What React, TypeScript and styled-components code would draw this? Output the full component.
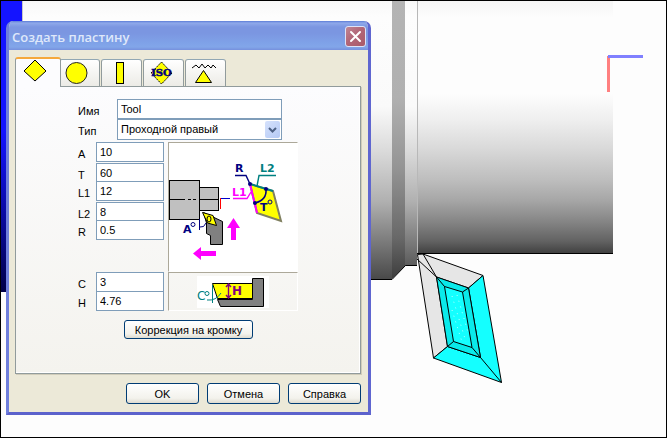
import React from "react";
import styled, { createGlobalStyle } from "styled-components";

const GlobalStyle = createGlobalStyle`
  * { box-sizing: border-box; }
  body {
    margin: 0;
    background: #fdfdfd;
    font-family: "Liberation Sans", Arial, sans-serif;
    font-size: 11px;
    line-height: 14px;
    color: #000;
  }
  button, input, select { font: inherit; color: inherit; }
`;

const Viewport = styled.main`
  position: relative;
  min-height: 100vh;
  border: 1px solid #000;
  overflow: hidden;
`;

const Scene = styled.svg`
  position: absolute;
  top: 0;
  left: 0;
  display: block;
`;

const Dialog = styled.section`
  position: absolute;
  top: 20px;
  left: 5px;
  width: 365px;
  border: solid #6f7fdc;
  border-width: 0 3px 3px;
  border-right-color: #5f66d0;
  border-bottom-color: #5c62cc;
  border-radius: 7px 7px 0 0;
  background: #ece9d8;
  overflow: hidden;
`;

const TitleBar = styled.header`
  display: flex;
  align-items: center;
  justify-content: space-between;
  height: 29px;
  margin: 0 -3px;
  padding: 2px 5px 0 6px;
  background: linear-gradient(#5b7cd6 0, #8fa9ea 2px, #7b96e1 6px, #7b96e1 12px, #7fa2e8 22px, #82a6e9 26px, #7690dd 29px);
`;

const Title = styled.h1`
  margin: 0;
  font: 600 13px/18px "Open Sans", sans-serif;
  color: #dfe8fa;
`;

const CloseButton = styled.button`
  display: flex;
  align-items: center;
  justify-content: center;
  width: 21px;
  height: 21px;
  padding: 0;
  border: 1px solid #dde3f8;
  border-radius: 3px;
  background: linear-gradient(135deg, #c08794, #b26678 45%, #a95a68);
`;

const Body = styled.div`
  padding: 7px 7px 8px 6px;
`;

const TabStrip = styled.div`
  display: flex;
  align-items: flex-end;
  gap: 1px;
  height: 29px;
`;

const Tab = styled.button<{ $active?: boolean }>`
  display: flex;
  align-items: center;
  justify-content: center;
  width: ${(p) => (p.$active ? 46 : 41)}px;
  height: ${(p) => (p.$active ? 30 : 27)}px;
  margin: ${(p) => (p.$active ? "0 -3px -1px 0" : "0")};
  padding: 0 4px ${(p) => (p.$active ? 5 : 0)}px 0;
  border: 1px solid #919b9c;
  border-top: ${(p) => (p.$active ? "2px solid #f5a83c" : "1px solid #91a7b4")};
  border-bottom: 0;
  border-radius: 3px 3px 0 0;
  background: ${(p) => (p.$active ? "#fcfcfe" : "linear-gradient(#fff, #ecebe6)")};
  z-index: ${(p) => (p.$active ? 1 : 0)};
`;

const Panel = styled.form`
  display: flex;
  flex-direction: column;
  padding: 12px 61px 34px 62px;
  border: 1px solid #919b9c;
  background: linear-gradient(#fcfcfe, #f4f3ee);
  box-shadow: 1px 1px 0 #d0ccba, inset -1px -1px 0 #fff;
`;

const Row = styled.div<{ $label: number }>`
  display: grid;
  grid-template-columns: ${(p) => p.$label}px 1fr;
`;

const Label = styled.label`
  padding-top: 5px;
  line-height: 14px;
  height: 18px;
`;

const TextBox = styled.input<{ $joined?: boolean; $height?: number }>`
  width: 100%;
  min-width: 0;
  height: ${(p) => p.$height ?? 20}px;
  padding: 0 3px;
  border: 1px solid #7f9db9;
  border-bottom-width: ${(p) => (p.$joined ? 0 : 1)}px;
  border-radius: 0;
  background: #fff;
  outline: 0;
`;

const TopFields = styled.div`
  width: 204px;
  margin-bottom: 2px;
`;

const SelectBox = styled.div`
  display: flex;
  position: relative;
  height: 21px;
`;

const Select = styled.select`
  appearance: none;
  width: 100%;
  padding: 0 18px 1px 3px;
  border: 1px solid #7f9db9;
  border-radius: 0;
  background: #fff;
`;

const DropArrow = styled.span`
  position: absolute;
  top: 2px;
  right: 2px;
  display: flex;
  align-items: center;
  justify-content: center;
  width: 15px;
  height: 17px;
  border-radius: 2px;
  background: linear-gradient(135deg, #d6e2fc, #b4c9f5);
  pointer-events: none;
`;

const Params = styled.div`
  display: grid;
  grid-template-columns: 86px 130px;
  column-gap: 4px;
`;

const ParamGroup = styled.div`
  display: flex;
  flex-direction: column;
`;

const ParamPair = styled.div`
  margin-bottom: 1px;
`;

const Figure = styled.div<{ $plain?: boolean }>`
  display: flex;
  align-items: center;
  justify-content: center;
  height: ${(p) => (p.$plain ? 39 : 130)}px;
  border: 1px solid #aca899;
  border-right-color: #fff;
  border-bottom-color: #fff;
  background: ${(p) => (p.$plain ? "transparent" : "#fff")};
`;

const PushButton = styled.button<{ $wide?: boolean }>`
  width: ${(p) => (p.$wide ? 129 : 73)}px;
  height: ${(p) => (p.$wide ? 19 : 21)}px;
  padding: 0;
  border: 1px solid #003c74;
  border-radius: 3px;
  background: linear-gradient(#fff, #f3f2ec 75%, #dedbd0);
  white-space: nowrap;
`;

const EdgeAction = styled.div`
  display: flex;
  margin: 9px 0 0 46px;
`;

const Footer = styled.footer`
  display: flex;
  justify-content: flex-end;
  gap: 8px;
  margin-top: 9px;
`;

function MachiningScene() {
  return (
    <Scene width="665" height="436" viewBox="1 1 665 436" aria-hidden="true">
      <defs>
        <linearGradient id="chuck" x1="0" y1="0" x2="0" y2="1">
          <stop offset="0" stopColor="#1414ff" />
          <stop offset="0.45" stopColor="#1414ff" />
          <stop offset="1" stopColor="#000048" />
        </linearGradient>
        <linearGradient id="body" gradientUnits="userSpaceOnUse" x1="0" y1="0" x2="0" y2="280">
          <stop offset="0" stopColor="#f8f8f8" />
          <stop offset="0.06" stopColor="#fdfdfd" />
          <stop offset="0.38" stopColor="#fafafa" />
          <stop offset="0.54" stopColor="#dadada" />
          <stop offset="0.72" stopColor="#b0b0b0" />
          <stop offset="0.86" stopColor="#7c7c7c" />
          <stop offset="1" stopColor="#484848" />
        </linearGradient>
        <linearGradient id="chamfer" gradientUnits="userSpaceOnUse" x1="0" y1="0" x2="0" y2="280">
          <stop offset="0" stopColor="#b4b4b4" />
          <stop offset="0.35" stopColor="#b0b0b0" />
          <stop offset="0.6" stopColor="#949494" />
          <stop offset="0.85" stopColor="#686868" />
          <stop offset="1" stopColor="#3c3c3c" />
        </linearGradient>
        <linearGradient id="shaft" gradientUnits="userSpaceOnUse" x1="0" y1="0" x2="0" y2="254">
          <stop offset="0" stopColor="#f5f5f5" />
          <stop offset="0.07" stopColor="#fdfdfd" />
          <stop offset="0.37" stopColor="#fdfdfd" />
          <stop offset="0.47" stopColor="#efefef" />
          <stop offset="0.59" stopColor="#d8d8d8" />
          <stop offset="0.71" stopColor="#bdbdbd" />
          <stop offset="0.79" stopColor="#a6a6a6" />
          <stop offset="0.87" stopColor="#868686" />
          <stop offset="0.95" stopColor="#626262" />
          <stop offset="1" stopColor="#3e3e3e" />
        </linearGradient>
      </defs>
      <rect x="1" y="1" width="21" height="291" fill="url(#chuck)" />
      <rect x="22" y="1" width="1" height="278" fill="#c8c8c8" />
      <rect x="23" y="1" width="369" height="278" fill="url(#body)" />
      <path d="M392 1H405V266L392 279Z" fill="url(#chamfer)" />
      <rect x="405" y="1" width="12" height="265" fill="url(#body)" />
      <rect x="417" y="1" width="196" height="252" fill="url(#shaft)" />
      <rect x="417" y="1" width="1" height="252" fill="#b8b8b8" />
      <path d="M371 279.500H392L405.500 265.500H417M417 253.500H613" fill="none" stroke="#000" />
      <rect x="607" y="56" width="3" height="36" fill="#ff8080" />
      <rect x="608" y="55" width="35" height="3" fill="#8080ff" />

      <g stroke="#000" strokeLinejoin="round">
        <path d="M417.500 254.500L423 254L483 275.500L468.500 288L436.500 277L447.500 346.500L433.500 358Z" fill="#e6e6e6" />
        <path d="M483 275.500L501.500 382.500L433.500 358L447.500 346.500L480.500 357.500L468.500 288Z" fill="#14ffff" />
        <path d="M436.500 277L468.500 288L480.500 357.500L447.500 346.500Z" fill="#0aeaea" />
        <path d="M444.500 286.500L462.500 292L472 347.500L453.500 341.500Z" fill="#14ffff" />
        <path
          d="M417 259L436.500 277L423 254M436.500 277L444.500 286.500M468.500 288L462.500 292M480.500 357.500L472 347.500M447.500 346.500L453.500 341.500M480.500 357.500L501.500 382.500"
          fill="none"
        />
      </g>
      <path d="M452 296L466 342M457 295L468 332M452 310L462 342" stroke="#b9ffff" strokeDasharray="1 5" />
    </Scene>
  );
}

function HolderDrawing() {
  return (
    <svg width="128" height="128" viewBox="0 0 128 128" aria-hidden="true" fontFamily="DejaVu Sans" fontWeight="bold" fontSize="11">
      <g stroke="#000" fill="#c0c0c0">
        <rect x="0.500" y="37.500" width="30" height="39" />
        <rect x="30.500" y="44.500" width="19" height="23" />
        <path d="M0 56.500H50" strokeDasharray="16 3 3 2 3 3 30" />
      </g>
      <path d="M51.500 55V66" stroke="#f00" />
      <path d="M52 55.500H61" stroke="#00c" />
      <path d="M34.500 69.500L53.500 78.500V101.500H41.500V92.500L37.500 90.500V80Z" fill="#808080" stroke="#000" />
      <path d="M33.500 69.500L44 72.500L47.500 82.500L38.500 80Z" fill="#ff0" stroke="#000" />
      <ellipse cx="40" cy="76" rx="2" ry="3" fill="none" stroke="#000" />
      <path d="M30.500 76V87M31 84Q35 85 37 80" stroke="#000080" fill="none" />
      <text x="14" y="90" fill="#000080">A</text>
      <circle cx="24" cy="81.500" r="2" fill="none" stroke="#000080" />
      <path d="M64.500 75L71 85H67V97H62V85H58Z" fill="#f0f" />
      <path d="M24 110.500L32 104V108H47V113H32V117Z" fill="#f0f" />

      <path d="M81 41L104 48L112 78L88 70Z" fill="#ff0" stroke="#808060" strokeWidth="2" />
      <path d="M81 41L104 48" stroke="#008080" strokeWidth="2" />
      <path d="M81 41L88 70" stroke="#f0f" strokeWidth="2" />
      <path d="M97 46Q98 57 86 60" fill="none" stroke="#000080" strokeWidth="1.500" />
      <g fill="#000080">
        <circle cx="81" cy="41" r="2" />
        <circle cx="97" cy="46" r="2" />
        <circle cx="86" cy="60" r="2" />
      </g>
      <text x="66" y="29" fill="#000080">R</text>
      <path d="M66 32.500H77L81 41" fill="none" stroke="#000080" strokeWidth="1.400" />
      <text x="91" y="29" fill="#008080">L2</text>
      <path d="M107 32.500H90L88 43" fill="none" stroke="#008080" strokeWidth="1.400" />
      <text x="63" y="53" fill="#f0f">L1</text>
      <path d="M64 55.500H78L82 49" fill="none" stroke="#f0f" strokeWidth="1.400" />
      <text x="91" y="68" fill="#000080">T</text>
      <circle cx="101" cy="59" r="2" fill="none" stroke="#000080" />
    </svg>
  );
}

function ThicknessDrawing() {
  return (
    <svg width="72" height="32" viewBox="0 0 72 32" aria-hidden="true" fontFamily="DejaVu Sans">
      <rect width="72" height="32" fill="#fff" />
      <path d="M20.500 23.500H55.500V2.500H66.500V30.500H23.500Z" fill="#808080" stroke="#000" />
      <path d="M15.500 7.500H55.500V22.500H20.500Z" fill="#ff0" stroke="#000" />
      <path d="M31.500 8V22M29 11L31.500 8L34 11M29 19L31.500 22L34 19" fill="none" stroke="#800080" strokeWidth="1.400" />
      <text x="35" y="19" fill="#800080" fontWeight="bold" fontSize="12">H</text>
      <path d="M15.500 9V27M10 24Q19 25 24 17" fill="none" stroke="#008080" />
      <text x="0" y="24" fill="#008080" fontSize="12">C</text>
      <circle cx="10" cy="17.500" r="2" fill="none" stroke="#008080" />
    </svg>
  );
}

const TabIcon = styled.svg.attrs({ width: 26, height: 24, viewBox: "0 0 26 24", "aria-hidden": true })`
  display: block;
  flex: none;
`;

const tabs = [
  { name: "Ромб", icon: <path d="M12 1L23 12L12 22L1 12Z" fill="#ff0" stroke="#000" /> },
  { name: "Круг", icon: <circle cx="11.500" cy="12" r="10.500" fill="#ff0" stroke="#222" /> },
  { name: "Канавка", icon: <rect x="9.500" y="1.500" width="7" height="21" fill="#ff0" stroke="#000" /> },
  {
    name: "ISO",
    icon: (
      <>
        <path d="M12.500 1L23 12L12.500 23L2 12Z" fill="#ff0" stroke="#000" strokeDasharray="2 1" />
        <text x="12.500" y="15" textAnchor="middle" fill="#000080" stroke="#000080" strokeWidth="0.500" fontFamily="DejaVu Serif" fontWeight="bold" fontSize="10">
          ISO
        </text>
      </>
    ),
  },
  {
    name: "Резьба",
    icon: (
      <>
        <path d="M1 7L5 4L8 7L11 3L14 7L17 4L20 7L22 4L25 7" fill="none" stroke="#000" />
        <path d="M12.500 9.500L20.500 21.500H4.500Z" fill="#ff0" stroke="#000" />
      </>
    ),
  },
];

function Param({ name, value, joined, height }: { name: string; value: string; joined?: boolean; height?: number }) {
  return (
    <Row $label={18}>
      <Label htmlFor={`param-${name}`}>{name}</Label>
      <TextBox id={`param-${name}`} defaultValue={value} $joined={joined} $height={height} />
    </Row>
  );
}

export default function App() {
  return (
    <>
      <GlobalStyle />
      <Viewport>
        <MachiningScene />
        <Dialog role="dialog" aria-labelledby="dialog-title">
          <TitleBar>
            <Title id="dialog-title">Создать пластину</Title>
            <CloseButton type="button" aria-label="Закрыть">
              <svg width="13" height="13" viewBox="0 0 13 13" aria-hidden="true">
                <path d="M2 2L11 11M11 2L2 11" stroke="#fff" strokeWidth="2" strokeLinecap="round" />
              </svg>
            </CloseButton>
          </TitleBar>
          <Body>
            <TabStrip role="tablist">
              {tabs.map((tab, i) => (
                <Tab key={tab.name} type="button" role="tab" aria-label={tab.name} aria-selected={i === 0} $active={i === 0}>
                  <TabIcon>{tab.icon}</TabIcon>
                </Tab>
              ))}
            </TabStrip>
            <Panel>
              <TopFields>
                <Row $label={39}>
                  <Label htmlFor="tool-name">Имя</Label>
                  <TextBox id="tool-name" defaultValue="Tool" />
                </Row>
                <Row $label={39}>
                  <Label htmlFor="tool-type">Тип</Label>
                  <SelectBox>
                    <Select id="tool-type">
                      <option>Проходной правый</option>
                    </Select>
                    <DropArrow>
                      <svg width="9" height="6" viewBox="0 0 9 6" aria-hidden="true">
                        <path d="M1 1L4.500 4.500L8 1" fill="none" stroke="#4d6185" strokeWidth="2" />
                      </svg>
                    </DropArrow>
                  </SelectBox>
                </Row>
              </TopFields>
              <Params>
                <ParamGroup>
                  <ParamPair>
                    <Param name="A" value="10" />
                  </ParamPair>
                  <ParamPair>
                    <Param name="T" value="60" joined height={18} />
                    <Param name="L1" value="12" />
                  </ParamPair>
                  <ParamPair>
                    <Param name="L2" value="8" joined height={18} />
                    <Param name="R" value="0.5" />
                  </ParamPair>
                </ParamGroup>
                <Figure>
                  <HolderDrawing />
                </Figure>
                <ParamGroup>
                  <Param name="C" value="3" joined height={19} />
                  <Param name="H" value="4.76" />
                </ParamGroup>
                <Figure $plain>
                  <ThicknessDrawing />
                </Figure>
              </Params>
              <EdgeAction>
                <PushButton type="button" $wide>Коррекция на кромку</PushButton>
              </EdgeAction>
            </Panel>
            <Footer>
              <PushButton type="button">OK</PushButton>
              <PushButton type="button">Отмена</PushButton>
              <PushButton type="button">Справка</PushButton>
            </Footer>
          </Body>
        </Dialog>
      </Viewport>
    </>
  );
}
